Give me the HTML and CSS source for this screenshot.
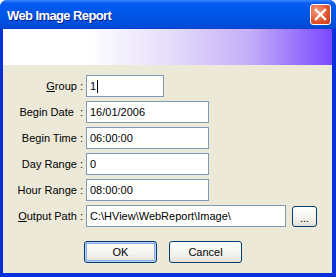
FILE: index.html
```html
<!DOCTYPE html>
<html>
<head>
	<title>Web Image Report</title>
	<meta http-equiv="content-type" content="text/html; charset=UTF-8">
	<link rel="stylesheet" href="styles.css">
</head>
<body>
	<div id="window">
		<div id="caption">
			<span class="title">Web Image Report</span>
			<span class="close">
				<svg width="13" height="13" viewBox="0 0 13 13">
					<path d="M2 2 L11 11 M11 2 L2 11" stroke="#fff" stroke-width="2.4" stroke-linecap="square"/>
				</svg>
			</span>
		</div>
		<div id="client">
			<div id="banner"></div>
			<div id="form">
				<label><u>G</u>roup :</label>
				<div class="field short"><span>1</span><i class="caret"></i></div>

				<label>Begin Date&nbsp; :</label>
				<div class="field">16/01/2006</div>

				<label>Begin Time :</label>
				<div class="field">06:00:00</div>

				<label>Day Range :</label>
				<div class="field">0</div>

				<label>Hour Range :</label>
				<div class="field">08:00:00</div>

				<label><u>O</u>utput Path :</label>
				<div class="path">
					<div class="field long">C:\HView\WebReport\Image\</div>
					<button class="browse">...</button>
				</div>
			</div>
			<div id="buttons">
				<button class="default">OK</button>
				<button>Cancel</button>
			</div>
		</div>
	</div>
</body>
</html>
```

FILE: styles.css
```css
*{
	box-sizing: border-box;
}

html, body{
	margin: 0;
	padding: 0;
	width: 336px;
	height: 277px;
	overflow: hidden;
	font-family: 'Liberation Sans', Arial, sans-serif;
	font-size: 11px;
	color: #000;
}

#window{
	width: 336px;
	height: 277px;
	display: flex;
	flex-direction: column;
	background: #0831D9;
	border-radius: 7px 7px 0 0;
	overflow: hidden;
}

#caption{
	height: 29px;
	display: flex;
	align-items: center;
	justify-content: space-between;
	padding: 0 5px 0 7px;
	background: linear-gradient(#3A8CFF 0, #0A5CF0 3px, #0058EE 8px, #0054E3 18px, #004DDB 25px, #0043CF 29px);
}

#caption .title{
	color: #fff;
	font-weight: bold;
	font-size: 13px;
	letter-spacing: -0.6px;
	text-shadow: 1px 1px 0 #0A1E8C;
	padding-top: 1px;
}

#caption .close{
	width: 21px;
	height: 21px;
	display: flex;
	align-items: center;
	justify-content: center;
	border: 1px solid #fff;
	border-radius: 3px;
	background: radial-gradient(circle at 30% 30%, #F39C7C, #E0522B 60%, #C9401C);
}

#client{
	flex: 1;
	margin: 0 4px 4px 3px;
	background: #ECE9D8;
	display: flex;
	flex-direction: column;
}

#banner{
	height: 36px;
	background: linear-gradient(to right, #fff 0, #fff 25%, #E6DEFB 50%, #C4AEF9 75%, #7B48FF 100%);
}

#form{
	display: grid;
	grid-template-columns: 80px auto;
	column-gap: 3px;
	row-gap: 4px;
	padding: 10px 0 0 0;
	align-items: center;
}

#form label{
	text-align: right;
	white-space: nowrap;
}

.field{
	height: 22px;
	width: 123px;
	border: 1px solid #7F9DB9;
	background: #fff;
	padding: 0 0 0 3px;
	display: flex;
	align-items: center;
	white-space: nowrap;
}

.field.short{
	width: 78px;
}

.field.long{
	width: 200px;
}

.caret{
	display: inline-block;
	width: 1px;
	height: 13px;
	background: #000;
	margin-left: 1px;
}

.path{
	display: flex;
	align-items: center;
	gap: 6px;
}

button{
	font-family: 'Liberation Sans', Arial, sans-serif;
	font-size: 11px;
	color: #000;
	border: 1px solid #003C74;
	border-radius: 3px;
	background: linear-gradient(#FFFFFF, #F4F3EE 60%, #E3E1D6);
	padding: 0;
}

.browse{
	width: 25px;
	height: 21px;
	padding-top: 3px;
}

#buttons{
	display: flex;
	gap: 12px;
	padding: 14px 0 0 81px;
}

#buttons button{
	width: 73px;
	height: 22px;
}

#buttons button.default{
	box-shadow: inset 0 0 0 1px #B9D1FA, inset 0 0 0 2px #89ADE4;
}
```
